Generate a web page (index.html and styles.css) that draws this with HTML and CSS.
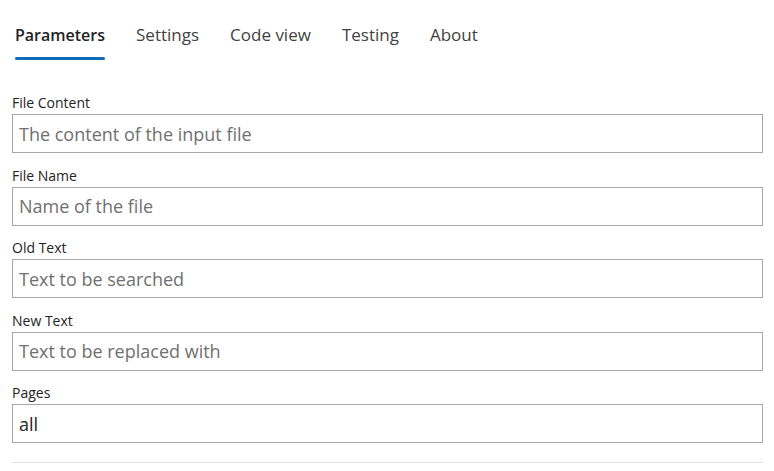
FILE: index.html
```html
<!DOCTYPE html>
<html lang="en">
<head>
<meta charset="utf-8">
<title>Parameters</title>
<link rel="stylesheet" href="styles.css">
</head>
<body>
<div class="page">
  <nav class="tabs">
    <div class="tab active"><span class="tab-label">Parameters</span><span class="tab-bar"></span></div>
    <div class="tab"><span class="tab-label">Settings</span><span class="tab-bar"></span></div>
    <div class="tab"><span class="tab-label">Code view</span><span class="tab-bar"></span></div>
    <div class="tab"><span class="tab-label">Testing</span><span class="tab-bar"></span></div>
    <div class="tab"><span class="tab-label">About</span><span class="tab-bar"></span></div>
  </nav>
  <form class="form">
    <div class="field">
      <label class="field-label" for="f1">File Content</label>
      <input class="field-input" id="f1" type="text" placeholder="The content of the input file">
    </div>
    <div class="field">
      <label class="field-label" for="f2">File Name</label>
      <input class="field-input" id="f2" type="text" placeholder="Name of the file">
    </div>
    <div class="field">
      <label class="field-label" for="f3">Old Text</label>
      <input class="field-input" id="f3" type="text" placeholder="Text to be searched">
    </div>
    <div class="field">
      <label class="field-label" for="f4">New Text</label>
      <input class="field-input" id="f4" type="text" placeholder="Text to be replaced with">
    </div>
    <div class="field">
      <label class="field-label" for="f5">Pages</label>
      <input class="field-input" id="f5" type="text" value="all">
    </div>
  </form>
  <div class="divider"></div>
</div>
</body>
</html>
```
FILE: styles.css
```css
* { box-sizing: border-box; }
html, body { margin: 0; padding: 0; background: #ffffff; }
body {
  font-family: "Open Sans", "Noto Sans", "Liberation Sans", sans-serif;
  color: #242424;
}
.page {
  padding: 0 11px 0 12px;
}
.tabs {
  display: flex;
  gap: 31px;
  padding: 23px 0 0 3px;
}
.tab {
  display: flex;
  flex-direction: column;
  align-items: stretch;
}
.tab-label {
  font-size: 17px;
  line-height: 24px;
  color: #424242;
  white-space: nowrap;
}
.tab.active .tab-label {
  font-size: 16px;
  font-weight: 600;
  color: #242424;
}
.tab-bar {
  height: 3px;
  margin-top: 10px;
  border-radius: 2px;
  background: transparent;
}
.tab.active .tab-bar { background: #0f6cbd; }
.form {
  display: flex;
  flex-direction: column;
  gap: 12.5px;
  margin: 33px 0 0;
}
.field {
  display: flex;
  flex-direction: column;
}
.field-label {
  font-size: 14px;
  line-height: 20px;
  height: 21px;
  color: #242424;
}
.field-input {
  display: block;
  width: 100%;
  height: 39px;
  margin: 0;
  padding: 0 6px;
  border: 1px solid #a6a6a6;
  border-radius: 0;
  font-family: inherit;
  font-size: 18px;
  color: #242424;
  background: #ffffff;
  outline: none;
}
.field-input::placeholder { color: #707070; opacity: 1; }
.divider {
  height: 1px;
  margin-top: 19px;
  background: #e0e0e0;
}
```
